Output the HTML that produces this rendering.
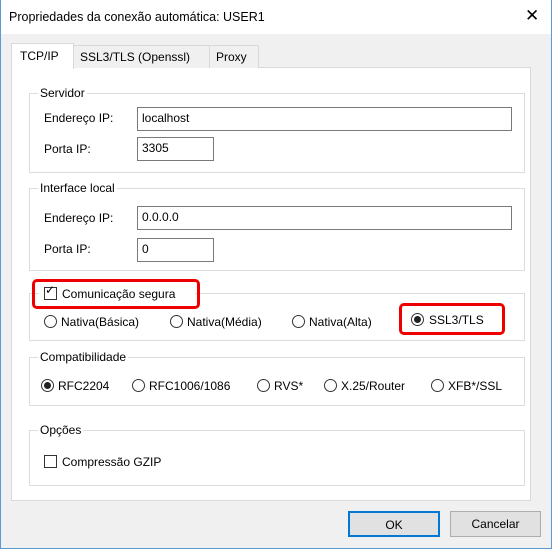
<!DOCTYPE html>
<html><head><meta charset="utf-8"><style>
*{box-sizing:border-box;margin:0;padding:0}
body{width:552px;height:549px;background:#fff;font-family:"Liberation Sans",sans-serif;font-size:12px;color:#000;position:relative;overflow:hidden}
.win{position:absolute;left:0;top:0;width:552px;height:549px;border:1px solid #5b9bd5;border-top:none;background:#f0f0f0}
.title{position:absolute;left:0;top:0;width:550px;height:34px;background:#fff}
.a{position:absolute;white-space:nowrap}
.panel{position:absolute;left:10px;top:67px;width:520px;height:434px;background:#fff;border:1px solid #d9d9d9}
.tab{position:absolute;top:45px;height:23px;border:1px solid #d9d9d9;border-bottom:none;background:#f0f0f0;padding:4px 6px}
.grp{position:absolute;border:1px solid #dcdcdc}
.gl{position:absolute;background:#fff;padding:0 2px;top:-8px;left:8px}
.inp{position:absolute;border:1px solid #7a7a7a;background:#fff;padding:3px 4px;height:24px}
.rad{position:absolute;width:13px;height:13px;border:1px solid #333;border-radius:50%;background:#fff}
.rad.on::after{content:"";position:absolute;left:2px;top:2px;width:7px;height:7px;border-radius:50%;background:#222}
.chk{position:absolute;width:13px;height:13px;border:1px solid #333;background:#fff}
.red{position:absolute;border:3px solid #e00;border-radius:5px}
.btn{position:absolute;top:511px;height:26px;border:1px solid #adadad;background:#e1e1e1;text-align:center;line-height:24px}
</style></head><body>
<div class="win">
<div class="title"></div>
<div class="a" style="left:8px;top:10px;font-size:12.5px">Propriedades da conexão automática: USER1</div>
<div class="a" style="left:524px;top:6px;font-size:17px">✕</div>
<div class="panel"></div>
<div class="tab" style="left:72px;width:137px">SSL3/TLS (Openssl)</div>
<div class="tab" style="left:208px;width:50px">Proxy</div>
<div class="tab" style="left:10px;top:43px;width:63px;height:26px;background:#fff;padding:5px 8px">TCP/IP</div>

<div class="grp" style="left:28px;top:93px;width:496px;height:80px"><span class="gl">Servidor</span></div>
<div class="a" style="left:43px;top:111px">Endereço IP:</div>
<div class="inp" style="left:136px;top:107px;width:375px">localhost</div>
<div class="a" style="left:43px;top:142px">Porta IP:</div>
<div class="inp" style="left:136px;top:137px;width:77px">3305</div>

<div class="grp" style="left:28px;top:188px;width:496px;height:83px"><span class="gl">Interface local</span></div>
<div class="a" style="left:43px;top:211px">Endereço IP:</div>
<div class="inp" style="left:136px;top:206px;width:375px">0.0.0.0</div>
<div class="a" style="left:43px;top:242px">Porta IP:</div>
<div class="inp" style="left:136px;top:238px;width:77px">0</div>

<div class="grp" style="left:28px;top:293px;width:496px;height:48px"></div>
<div class="a" style="left:38px;top:284px;width:156px;height:20px;background:#fff"></div>
<div class="chk" style="left:43px;top:287px"></div>
<div class="a" style="left:44px;top:283px;font-size:12px">✓</div>
<div class="a" style="left:61px;top:287px">Comunicação segura</div>
<div class="red" style="left:31px;top:279px;width:168px;height:30px"></div>
<div class="rad" style="left:43px;top:315px"></div><div class="a" style="left:60px;top:315px">Nativa(Básica)</div>
<div class="rad" style="left:169px;top:315px"></div><div class="a" style="left:186px;top:315px">Nativa(Média)</div>
<div class="rad" style="left:291px;top:315px"></div><div class="a" style="left:308px;top:315px">Nativa(Alta)</div>
<div class="rad on" style="left:410px;top:313px"></div><div class="a" style="left:428px;top:313px">SSL3/TLS</div>
<div class="red" style="left:398px;top:303px;width:106px;height:32px"></div>

<div class="grp" style="left:28px;top:357px;width:496px;height:49px"><span class="gl">Compatibilidade</span></div>
<div class="rad on" style="left:40px;top:379px"></div><div class="a" style="left:57px;top:379px">RFC2204</div>
<div class="rad" style="left:131px;top:379px"></div><div class="a" style="left:148px;top:379px">RFC1006/1086</div>
<div class="rad" style="left:256px;top:379px"></div><div class="a" style="left:273px;top:379px">RVS*</div>
<div class="rad" style="left:323px;top:379px"></div><div class="a" style="left:340px;top:379px">X.25/Router</div>
<div class="rad" style="left:430px;top:379px"></div><div class="a" style="left:447px;top:379px">XFB*/SSL</div>

<div class="grp" style="left:28px;top:430px;width:496px;height:56px"><span class="gl">Opções</span></div>
<div class="chk" style="left:43px;top:455px"></div>
<div class="a" style="left:61px;top:455px">Compressão GZIP</div>

<div class="btn" style="left:347px;width:92px;border:2px solid #0078d7">OK</div>
<div class="btn" style="left:449px;width:91px">Cancelar</div>
</div>
</body></html>
